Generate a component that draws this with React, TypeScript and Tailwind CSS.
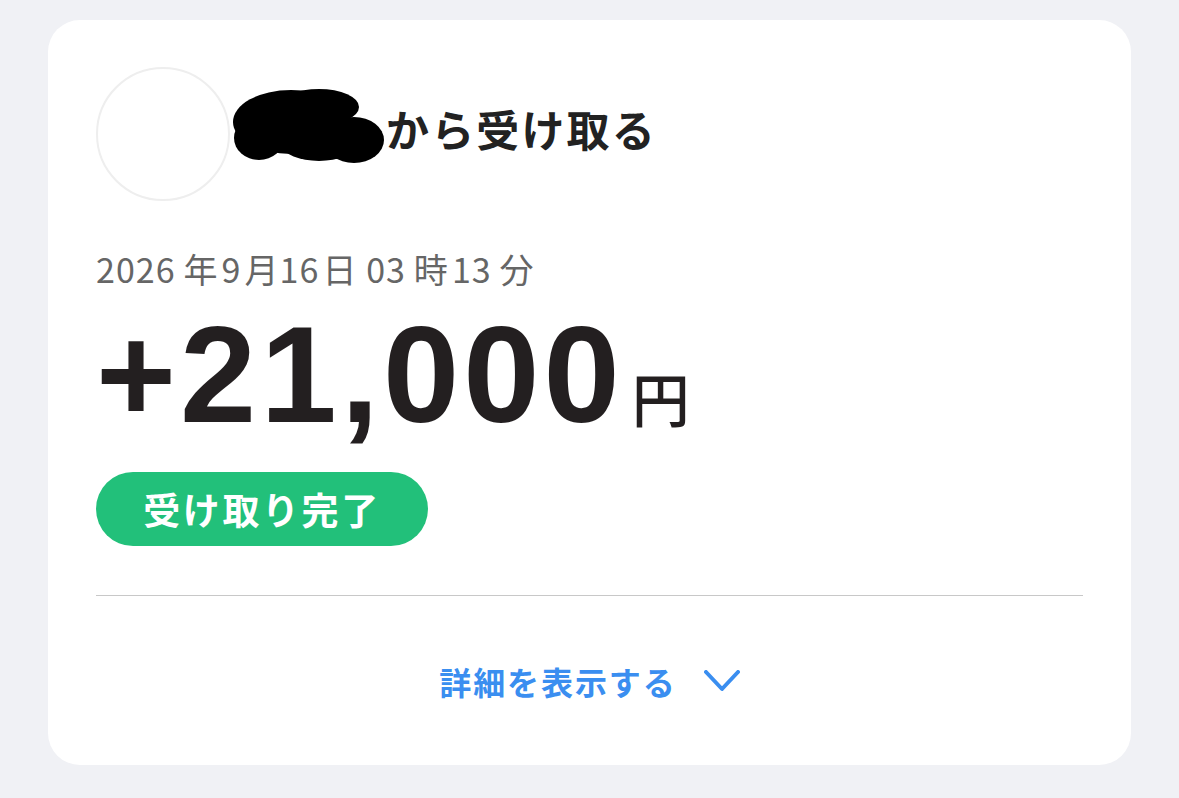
import React from "react";

const jp = { fontFamily: '"Noto Sans CJK JP", "Noto Sans", sans-serif' };
const latin = { fontFamily: '"Liberation Sans", Arial, "Noto Sans CJK JP", sans-serif' };

function Redaction() {
  return (
    <svg width="156" height="78" viewBox="230 88 156 78" className="ml-[1px] mb-[14px] shrink-0">
      <g fill="#000">
        <ellipse cx="290" cy="122" rx="58" ry="32" />
        <ellipse cx="318" cy="107" rx="40" ry="18" />
        <ellipse cx="353" cy="140" rx="30" ry="23" />
        <ellipse cx="258" cy="138" rx="25" ry="22" />
        <ellipse cx="318" cy="146" rx="36" ry="15" />
      </g>
    </svg>
  );
}

export default function App() {
  return (
    <div className="min-h-[798px] w-full bg-[#f0f1f5] pt-[20px] pl-[48px] pr-[48px]">
      <div className="bg-white rounded-[32px] px-[48px] pt-[47px] pb-[64px]" style={jp}>
        <div className="flex items-center">
          <div className="w-[134px] h-[134px] rounded-full border-2 border-[#eeeeee] shrink-0" />
          <Redaction />
          <div className="text-[43px] font-bold text-[#222222] leading-none tracking-[0.05em] mb-[12px] -ml-[1px]">
            から受け取る
          </div>
        </div>

        <div className="mt-[48px] text-[34px] leading-[40px] text-[#666666] tracking-[0.03em]">
          2026&#8201;年&#8202;9&#8202;月16&#8202;日 03&#8201;時&#8202;13&#8201;分
        </div>

        <div className="flex items-baseline mt-[26px]">
          <span className="text-[137px] font-bold text-[#231f20] leading-[120px] tracking-[0.03em]" style={latin}>
            +21,000
          </span>
          <span className="text-[58px] font-medium text-[#231f20] ml-[8px] leading-none" style={jp}>
            円
          </span>
        </div>

        <div className="mt-[37px] w-[332px] h-[74px] rounded-full bg-[#22c07a] flex items-center justify-center">
          <span className="text-white text-[37px] font-bold tracking-[0.07em] leading-none">受け取り完了</span>
        </div>

        <div className="mt-[49px] border-t border-[#c8c8c8]" />

        <div className="flex items-center justify-center gap-[27px] mt-[65px] text-[#3a8ef0]">
          <span className="text-[32px] font-bold leading-[40px] tracking-[0.06em]">詳細を表示する</span>
          <svg width="36" height="22" viewBox="0 0 36 22" fill="none">
            <path d="M2 2 L18 19 L34 2" stroke="#3a8ef0" strokeWidth="4" strokeLinecap="round" strokeLinejoin="round" />
          </svg>
        </div>
      </div>
    </div>
  );
}
